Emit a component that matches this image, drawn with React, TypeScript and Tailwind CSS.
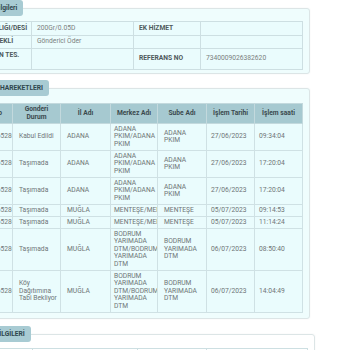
import React from 'react';

type Hareket = {
  no: string;
  durum: string;
  il: string;
  merkez: string;
  sube: string;
  tarih: string;
  saat: string;
};

const hareketler: Hareket[] = [
  { no: '7340009026528-1', durum: 'Kabul Edildi', il: 'ADANA', merkez: 'ADANA PKIM/ADANA PKIM', sube: 'ADANA PKIM', tarih: '27/06/2023', saat: '09:34:04' },
  { no: '7340009026528-1', durum: 'Taşımada', il: 'ADANA', merkez: 'ADANA PKIM/ADANA PKIM', sube: 'ADANA PKIM', tarih: '27/06/2023', saat: '17:20:04' },
  { no: '7340009026528-1', durum: 'Taşımada', il: 'ADANA', merkez: 'ADANA PKIM/ADANA PKIM', sube: 'ADANA PKIM', tarih: '27/06/2023', saat: '17:20:04' },
  { no: '7340009026528-1', durum: 'Taşımada', il: 'MUĞLA', merkez: 'MENTEŞE/MENTEŞE', sube: 'MENTEŞE', tarih: '05/07/2023', saat: '09:14:53' },
  { no: '7340009026528-1', durum: 'Taşımada', il: 'MUĞLA', merkez: 'MENTEŞE/MENTEŞE', sube: 'MENTEŞE', tarih: '05/07/2023', saat: '11:14:24' },
  { no: '7340009026528-1', durum: 'Taşımada', il: 'MUĞLA', merkez: 'BODRUM YARIMADA DTM/BODRUM YARIMADA DTM', sube: 'BODRUM YARIMADA DTM', tarih: '06/07/2023', saat: '08:50:40' },
  { no: '7340009026528-1', durum: 'Köy Dağıtımına Tabi Bekliyor', il: 'MUĞLA', merkez: 'BODRUM YARIMADA DTM/BODRUM YARIMADA DTM', sube: 'BODRUM YARIMADA DTM', tarih: '06/07/2023', saat: '14:04:49' },
];

const legendCls =
  'rounded-[3px] bg-[#a8cbd3] px-[6px] py-[4px] text-[6.7px] font-bold leading-[8px] text-[#2f474d]';

// bilgi tablosu hücreleri
const lbl = 'border border-[#cddfe2] px-[5px] py-[2.5px] align-middle font-bold text-[#4f5a5c]';
const val = 'border border-[#cddfe2] px-[5px] py-[2.5px] align-middle text-[#7a7f80]';

// hareket tablosu hücreleri
const th = 'border border-[#c3d9dd] px-[2px] py-[2px] text-center align-middle font-bold text-[#3b4a4e]';
const td = 'overflow-hidden border border-[#cfe1e4] py-[1.75px] align-middle text-[#6f7577]';

const App: React.FC = () => {
  return (
    <div className="h-[350px] w-[350px] overflow-hidden bg-white font-['Roboto',sans-serif] text-[6.7px] leading-[7.5px]">
      <div className="-ml-[50px] w-[365px]">
        {/* Gönderi bilgileri */}
        <fieldset className="w-[360px] rounded-[3px] border border-[#dce5e6] bg-[#effdfd] px-[6px] pb-[3px] pt-[5px] shadow-[0_0_2px_rgba(0,0,0,0.06)]">
          <legend className={`ml-[6px] ${legendCls}`}>Gönderi Bilgileri</legend>
          <table className="w-full table-fixed border-collapse bg-[#eafcfd]">
            <colgroup>
              <col className="w-[74px]" />
              <col className="w-[102px]" />
              <col className="w-[67px]" />
              <col />
            </colgroup>
            <tbody>
              <tr>
                <td className={`${lbl} whitespace-nowrap`}>TOPL. AĞIRLIĞI/DESİ</td>
                <td className={val}>200Gr/0.05D</td>
                <td className={lbl}>EK HİZMET</td>
                <td className={val}></td>
              </tr>
              <tr>
                <td className={`${lbl} whitespace-nowrap`}>TAHSİLAT ŞEKLİ</td>
                <td className={val}>Gönderici Öder</td>
                <td className={lbl}></td>
                <td className={val}></td>
              </tr>
              <tr>
                <td className={`${lbl} pl-[11px]`}>GÖNDEREN TES. NOKTASI</td>
                <td className={val}></td>
                <td className={lbl}>REFERANS NO</td>
                <td className={val}>7340009026382620</td>
              </tr>
            </tbody>
          </table>
        </fieldset>

        {/* Gönderi hareketleri */}
        <fieldset className="mt-[6px] w-[360px] rounded-[3px] border border-[#dce5e6] bg-[#effdfd] px-[6px] pb-[5px] pt-[7px] shadow-[0_0_2px_rgba(0,0,0,0.06)]">
          <legend className={`ml-[7px] ${legendCls}`}>GÖNDERİ HAREKETLERI</legend>
          <table className="w-full table-fixed border-collapse bg-[#eafcfd]">
            <colgroup>
              <col className="w-[55px]" />
              <col className="w-[48px]" />
              <col className="w-[50px]" />
              <col className="w-[47px]" />
              <col className="w-[49px]" />
              <col className="w-[48px]" />
              <col />
            </colgroup>
            <thead>
              <tr className="bg-[#a6c9d0]">
                <th className={th}>Gonderi No</th>
                <th className={th}>
                  Gonderi
                  <br />
                  Durum
                </th>
                <th className={th}>İl Adı</th>
                <th className={th}>Merkez Adı</th>
                <th className={th}>Sube Adı</th>
                <th className={th}>İşlem Tarihi</th>
                <th className={th}>İşlem saati</th>
              </tr>
            </thead>
            <tbody>
              {hareketler.map((h, i) => (
                <tr key={i}>
                  <td className={`${td} whitespace-nowrap pl-[5px]`}>{h.no}</td>
                  <td className={`${td} pl-[6px] pr-[1px]`}>{h.durum}</td>
                  <td className={`${td} pl-[6px]`}>{h.il}</td>
                  <td className={`${td} pl-[3px]`}>{h.merkez}</td>
                  <td className={`${td} pl-[6px] pr-[4px]`}>{h.sube}</td>
                  <td className={`${td} pl-[4px]`}>{h.tarih}</td>
                  <td className={`${td} pl-[4px]`}>{h.saat}</td>
                </tr>
              ))}
            </tbody>
          </table>
        </fieldset>

        {/* Alıcı bilgileri */}
        <fieldset className="mt-[7px] w-[365px] rounded-[3px] border border-[#dce5e6] bg-white px-[6px] pb-[5px] pt-[6px] shadow-[0_0_2px_rgba(0,0,0,0.06)]">
          <legend className={`ml-[14px] ${legendCls}`}>ALICI BİLGİLERİ</legend>
          <table className="w-full table-fixed border-collapse">
            <colgroup>
              <col className="w-[75px]" />
              <col className="w-[105px]" />
              <col className="w-[69px]" />
              <col />
            </colgroup>
            <tbody>
              <tr>
                <td className={lbl}>ALICI ADI</td>
                <td className={val}>—</td>
                <td className={lbl}>TELEFON</td>
                <td className={val}>—</td>
              </tr>
            </tbody>
          </table>
        </fieldset>
      </div>
    </div>
  );
};

export default App;
